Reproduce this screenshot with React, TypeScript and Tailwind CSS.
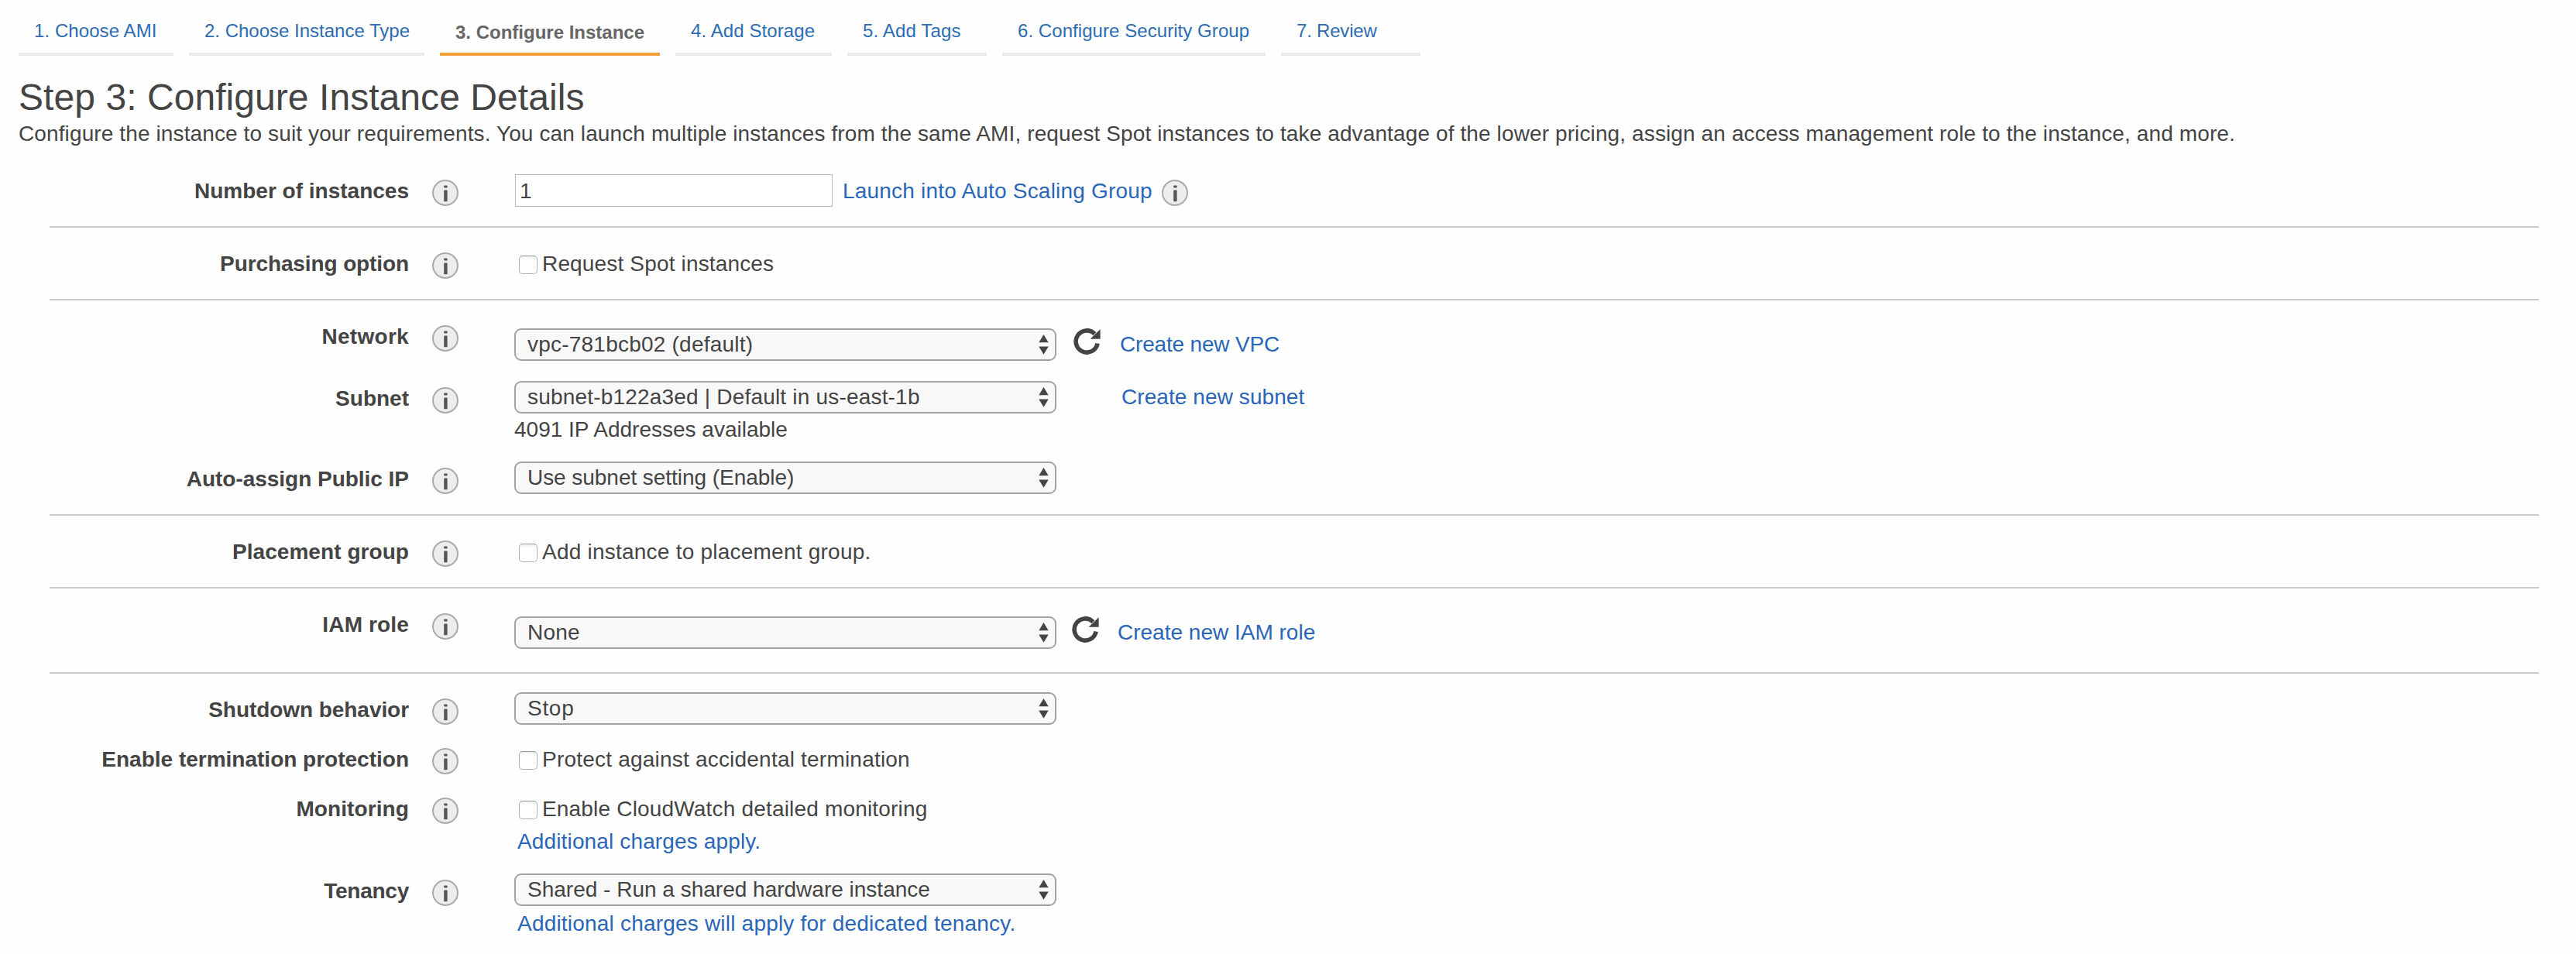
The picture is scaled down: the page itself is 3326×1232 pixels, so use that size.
import type { ReactNode } from "react";

function InfoIcon() {
  return (
    <svg width="34" height="34" viewBox="0 0 34 34" className="shrink-0" aria-label="info">
      <circle cx="17" cy="17" r="16" fill="#ededed" stroke="#ababab" strokeWidth="2" />
      <rect x="15.2" y="7.4" width="4.4" height="3.2" rx="0.8" fill="#555" />
      <rect x="15.2" y="13.4" width="4.4" height="14.8" rx="0.6" fill="#555" />
    </svg>
  );
}

function RefreshIcon() {
  return (
    <svg width="35" height="35" viewBox="0 0 35 35" className="shrink-0" aria-label="refresh">
      <path d="M31.1 19.6A14.1 14.1 0 1 1 27.4 7.2" fill="none" stroke="#444" strokeWidth="5.6" />
      <path d="M34.6 1.2V13.8H21.6Z" fill="#444" />
    </svg>
  );
}

function Select({ children, className }: { children: ReactNode; className?: string }) {
  return (
    <div className="flex h-[42px] w-[700px] shrink-0 items-center justify-between rounded-[9px] border-2 border-[#a3a3a3] bg-[#f8f8f8] pr-2 pl-[15px]">
      <span className={`h-[38px] leading-[37px] whitespace-pre ${className ?? ""}`}>{children}</span>
      <svg width="13" height="28" viewBox="0 0 13 28" className="shrink-0">
        <path d="M6.5 1L12.7 11.3H0.3ZM6.5 26.8L12.7 16.5H0.3Z" fill="#444" />
      </svg>
    </div>
  );
}

function Check({ children, className }: { children: ReactNode; className?: string }) {
  return (
    <label className="flex items-start pt-2 pl-1.5">
      <span className="mt-1 h-6 w-6 rounded-[5px] border border-[#b2b2b2] border-t-[#989898] bg-gradient-to-b from-[#f3f3f3] via-white via-25% to-white" />
      <span className={`pl-1.5 ${className ?? ""}`}>{children}</span>
    </label>
  );
}

function Link({ children, className }: { children: ReactNode; className?: string }) {
  return (
    <a href="#" className={`text-[#2a66b8] ${className ?? ""}`}>
      {children}
    </a>
  );
}

function Row({
  label,
  labelClass,
  className,
  children,
}: {
  label: string;
  labelClass?: string;
  className: string;
  children: ReactNode;
}) {
  return (
    <div className={`flex items-start ${className}`}>
      <div className={`w-[464px] shrink-0 pt-2 text-right font-bold ${labelClass ?? ""}`}>{label}</div>
      <div className="mr-[72px] ml-[30px] pt-2">
        <InfoIcon />
      </div>
      <div className="flex flex-col items-start">{children}</div>
    </div>
  );
}

function Section({ children, last }: { children: ReactNode; last?: boolean }) {
  return (
    <section className={last ? "pt-6" : "border-b-2 border-[#cbcbcb] pt-6"}>{children}</section>
  );
}

const steps = [
  { text: "1. Choose AMI", width: "w-[200px]", track: "tracking-[0.08px]" },
  { text: "2. Choose Instance Type", width: "w-[304px]", track: "" },
  { text: "3. Configure Instance", width: "w-[284px]", track: "", active: true },
  { text: "4. Add Storage", width: "w-[202px]", track: "tracking-[0.1px]" },
  { text: "5. Add Tags", width: "w-[180px]", track: "tracking-[0.15px]" },
  { text: "6. Configure Security Group", width: "w-[340px]", track: "tracking-[0.06px]" },
  { text: "7. Review", width: "w-[180px]", track: "tracking-[-0.2px]" },
];

export default function App() {
  return (
    <div className="h-[1232px] w-[3326px] overflow-hidden bg-[#fefefe] font-['Liberation_Sans',Arial,sans-serif] text-[28px] leading-[29px] whitespace-nowrap text-[#444]">
      <nav className="flex gap-5 pl-6 text-[24px] leading-[25px]">
        {steps.map((s) => (
          <a
            key={s.text}
            href="#"
            className={`h-[72px] border-b-4 pl-5 ${s.width} ${s.track} ${
              s.active
                ? "border-[#f29d38] pt-[29px] font-bold text-[#666]"
                : "border-[#eaeaea] pt-[27px] text-[#2c6cb3]"
            }`}
          >
            {s.text}
          </a>
        ))}
      </nav>

      <header className="pt-[29px] pb-[13px] pl-6">
        <h1 className="text-[48px] leading-[49px] tracking-[0.06px]">Step 3: Configure Instance Details</h1>
        <p className="pt-2 tracking-[0.116px]">
          Configure the instance to suit your requirements. You can launch multiple instances from the same AMI, request
          Spot instances to take advantage of the lower pricing, assign an access management role to the instance, and
          more.
        </p>
      </header>

      <main className="mr-12 ml-16">
        <Section>
          <Row label="Number of instances" className="h-[68px]">
            <div className="flex items-start pt-px">
              <div className="ml-px h-[42px] w-[410px] border border-[#bbb] bg-white pl-[5px] leading-[41px]">1</div>
              <Link className="mt-[7px] ml-[13px] tracking-[0.2px]">Launch into Auto Scaling Group</Link>
              <div className="mt-[7px] ml-3">
                <InfoIcon />
              </div>
            </div>
          </Row>
        </Section>

        <Section>
          <Row label="Purchasing option" labelClass="tracking-[-0.11px]" className="h-[68px]">
            <Check className="tracking-[0.16px]">Request Spot instances</Check>
          </Row>
        </Section>

        <Section>
          <Row label="Network" labelClass="tracking-[0.3px]" className="h-20">
            <div className="flex items-start pt-3">
              <Select className="tracking-[0.22px]">vpc-781bcb02 (default)</Select>
              <div className="ml-[22px]">
                <RefreshIcon />
              </div>
              <Link className="mt-1.5 ml-[25px] tracking-[-0.178px]">Create new VPC</Link>
            </div>
          </Row>
          <Row label="Subnet" className="h-[104px]">
            <div className="flex items-start">
              <Select className="tracking-[0.192px]">subnet-b122a3ed | Default in us-east-1b</Select>
              <Link className="mt-1.5 ml-[84px] tracking-[0.078px]">Create new subnet</Link>
            </div>
            <div className="pt-1.5">4091 IP Addresses available</div>
          </Row>
          <Row label="Auto-assign Public IP" labelClass="tracking-[-0.03px]" className="h-[68px]">
            <Select className="tracking-[-0.05px]">Use subnet setting (Enable)</Select>
          </Row>
        </Section>

        <Section>
          <Row label="Placement group" labelClass="tracking-[0.06px]" className="h-[68px]">
            <Check className="tracking-[0.23px]">Add instance to placement group.</Check>
          </Row>
        </Section>

        <Section>
          <Row label="IAM role" labelClass="tracking-[0.15px]" className="h-[84px]">
            <div className="flex items-start pt-3">
              <Select className="tracking-[0.2px]">None</Select>
              <div className="ml-5">
                <RefreshIcon />
              </div>
              <Link className="mt-1.5 ml-[24px]">Create new IAM role</Link>
            </div>
          </Row>
        </Section>

        <Section last>
          <Row label="Shutdown behavior" labelClass="tracking-[-0.06px]" className="h-16">
            <Select className="tracking-[0.7px]">Stop</Select>
          </Row>
          <Row label="Enable termination protection" className="h-16">
            <Check className="tracking-[0.21px]">Protect against accidental termination</Check>
          </Row>
          <Row label="Monitoring" labelClass="tracking-[0.1px]" className="h-[106px]">
            <Check className="tracking-[0.18px]">Enable CloudWatch detailed monitoring</Check>
            <Link className="mt-[13px] ml-1 tracking-[0.14px]">Additional charges apply.</Link>
          </Row>
          <Row label="Tenancy" labelClass="tracking-[-0.25px]" className="h-20">
            <Select>Shared - Run a shared hardware instance</Select>
            <Link className="mt-2 ml-1 tracking-[0.2px]">Additional charges will apply for dedicated tenancy.</Link>
          </Row>
        </Section>
      </main>
    </div>
  );
}
